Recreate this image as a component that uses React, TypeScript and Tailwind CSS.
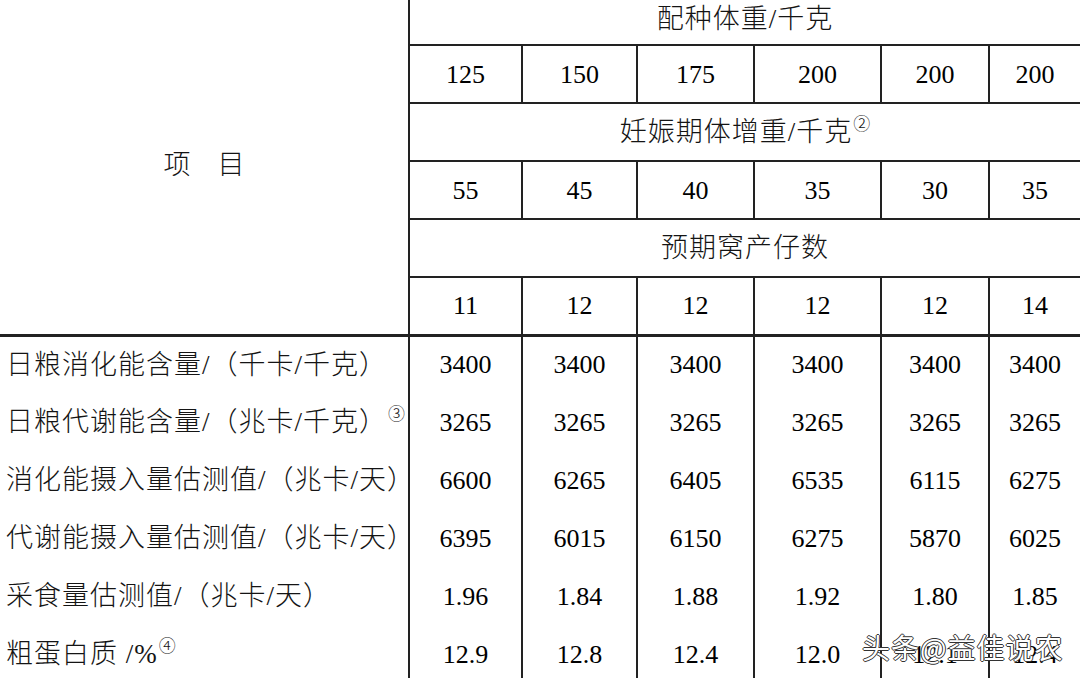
const cjk = "font-['Liberation_Serif','Noto_Sans_CJK_SC',serif]";

const weights = ["125", "150", "175", "200", "200", "200"];
const gains = ["55", "45", "40", "35", "30", "35"];
const litters = ["11", "12", "12", "12", "12", "14"];

const rows: { label: string; note?: string; values: string[] }[] = [
  { label: "日粮消化能含量/（千卡/千克）", values: ["3400", "3400", "3400", "3400", "3400", "3400"] },
  { label: "日粮代谢能含量/（兆卡/千克）", note: "③", values: ["3265", "3265", "3265", "3265", "3265", "3265"] },
  { label: "消化能摄入量估测值/（兆卡/天）", values: ["6600", "6265", "6405", "6535", "6115", "6275"] },
  { label: "代谢能摄入量估测值/（兆卡/天）", values: ["6395", "6015", "6150", "6275", "5870", "6025"] },
  { label: "采食量估测值/（兆卡/天）", values: ["1.96", "1.84", "1.88", "1.92", "1.80", "1.85"] },
  { label: "粗蛋白质 /%", note: "④", values: ["12.9", "12.8", "12.4", "12.0", "12.1", "12.4"] },
];

function Note({ children }: { children: string }) {
  return <sup className="text-[17px] relative -top-[11px] ml-[1px] font-light tracking-normal">{children}</sup>;
}

function NumRow({ values }: { values: string[] }) {
  return (
    <tr className="h-[58px]">
      {values.map((v, i) => (
        <td
          key={i}
          className={`border-b-2 border-[#222] text-center text-[26px] text-black ${i > 0 ? "border-l-2" : ""}`}
        >
          {v}
        </td>
      ))}
    </tr>
  );
}

function SpanRow({ children }: { children: React.ReactNode }) {
  return (
    <tr className="h-[58px]">
      <td colSpan={6} className="border-b-2 border-[#222] text-center text-[27px] font-light tracking-[1px]">
        {children}
      </td>
    </tr>
  );
}

export default function App() {
  return (
    <div className={`relative w-[1080px] h-[678px] overflow-hidden bg-white text-[#141414] ${cjk}`}>
      <table className="-mt-[13px] w-[1080px] table-fixed border-collapse">
        <colgroup>
          <col className="w-[409px]" />
          <col className="w-[113px]" />
          <col className="w-[115px]" />
          <col className="w-[117px]" />
          <col className="w-[127px]" />
          <col className="w-[108px]" />
          <col className="w-[91px]" />
        </colgroup>
        <tbody>
          <tr className="h-[58px]">
            <td rowSpan={6} className="border-r-2 border-b-[3px] border-[#222] text-center text-[27px] font-light pt-[10px]">
              项　目
            </td>
            <td colSpan={6} className="border-b-2 border-[#222] text-center text-[27px] font-light tracking-[1px] pt-[8px]">
              配种体重/千克
            </td>
          </tr>
          <NumRow values={weights} />
          <SpanRow>
            妊娠期体增重/千克<Note>②</Note>
          </SpanRow>
          <NumRow values={gains} />
          <SpanRow>预期窝产仔数</SpanRow>
          <tr className="h-[58px]">
            {litters.map((v, i) => (
              <td
                key={i}
                className={`border-b-[3px] border-[#222] text-center text-[26px] text-black ${i > 0 ? "border-l-2" : ""}`}
              >
                {v}
              </td>
            ))}
          </tr>
          {rows.map((r, ri) => (
            <tr key={ri} className="h-[58px]">
              <td className="border-r-2 border-[#222] pl-[6px] text-left text-[27px] font-light tracking-[1px] whitespace-nowrap">
                {r.label}
                {r.note && <Note>{r.note}</Note>}
              </td>
              {r.values.map((v, i) => (
                <td
                  key={i}
                  className={`border-[#222] text-center text-[26px] text-black ${i > 0 ? "border-l-2" : ""}`}
                >
                  {v}
                </td>
              ))}
            </tr>
          ))}
        </tbody>
      </table>

      {/* watermark */}
      <div className="absolute left-[862px] top-[626px] text-[28px] tracking-[1px] text-white font-['Noto_Sans_CJK_SC',sans-serif] [text-shadow:1px_0_0_#333,-1px_0_0_#333,0_1px_0_#333,0_-1px_0_#333]">
        头条@益佳说农
      </div>
    </div>
  );
}
